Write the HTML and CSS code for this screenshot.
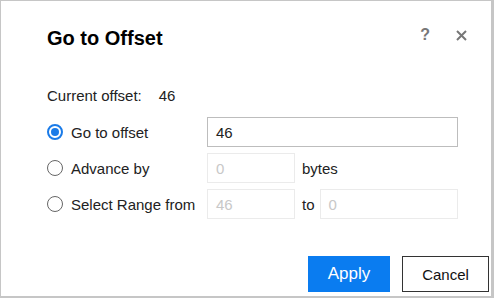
FILE: index.html
```html
<!DOCTYPE html>
<html>
<head>
<meta charset="utf-8">
<link rel="stylesheet" href="styles.css">
</head>
<body>
<div class="dialog">
  <div class="header">
    <h1 class="title">Go to Offset</h1>
    <div class="tools">
      <span class="help">?</span>
      <svg class="close" width="11" height="11" viewBox="0 0 11 11"><path d="M1 1 L10 10 M10 1 L1 10" stroke="#777" stroke-width="2" fill="none"/></svg>
    </div>
  </div>
  <div class="body">
    <div class="current"><span class="cur-label">Current offset:</span><span class="cur-value">46</span></div>
    <div class="row">
      <label class="opt"><span class="radio checked"></span>Go to offset</label>
      <div class="field wide">46</div>
    </div>
    <div class="row">
      <label class="opt"><span class="radio"></span>Advance by</label>
      <div class="field small disabled">0</div>
      <span class="suffix">bytes</span>
    </div>
    <div class="row">
      <label class="opt"><span class="radio"></span>Select Range from</label>
      <div class="field small disabled">46</div>
      <span class="suffix to">to</span>
      <div class="field rest disabled">0</div>
    </div>
  </div>
  <div class="footer">
    <button class="btn primary">Apply</button>
    <button class="btn secondary">Cancel</button>
  </div>
</div>
</body>
</html>
```
FILE: styles.css
```css
* { box-sizing: border-box; }
html, body { margin: 0; padding: 0; background: #fff; }
body { font-family: "Liberation Sans", Arial, sans-serif; color: #222; }
.dialog {
  width: 494px;
  height: 298px;
  border-top: 1px solid #c6c6c6;
  border-left: 1px solid #c6c6c6;
  border-right: 3px solid #c6c6c6;
  border-bottom: 2px solid #c6c6c6;
  display: flex;
  flex-direction: column;
  background: #fff;
}
.header {
  display: flex;
  align-items: flex-start;
  justify-content: space-between;
  padding: 25px 0 0 46px;
  height: 49px;
}
.title {
  margin: 0;
  font-size: 20px;
  line-height: 24px;
  font-weight: bold;
  color: #000;
}
.tools {
  display: flex;
  align-items: center;
  gap: 26px;
  padding-right: 24px;
  margin-top: 1px;
}
.help {
  font-size: 16px;
  font-weight: bold;
  color: #777;
  line-height: 16px;
}
.close { display: block; }
.body {
  padding: 37px 0 0 46px;
  display: flex;
  flex-direction: column;
  gap: 6px;
}
.current {
  font-size: 15px;
  line-height: 18px;
  margin-bottom: 6px;
}
.cur-value { margin-left: 17px; }
.row {
  display: flex;
  align-items: center;
  height: 30px;
  font-size: 15px;
}
.opt {
  width: 160px;
  display: flex;
  align-items: center;
  gap: 8px;
}
.radio {
  width: 16px;
  height: 16px;
  border-radius: 50%;
  border: 1.5px solid #666;
  display: flex;
  align-items: center;
  justify-content: center;
}
.radio.checked { border: 2px solid #1a7be8; }
.radio.checked::after {
  content: "";
  width: 8px;
  height: 8px;
  border-radius: 50%;
  background: #1a7be8;
}
.field {
  height: 30px;
  border: 1px solid #bdbdbd;
  padding: 0 8px;
  display: flex;
  align-items: center;
  font-size: 15px;
  color: #222;
}
.field.wide { width: 251px; }
.field.small { width: 88px; }
.field.rest { width: 138px; }
.field.disabled { border-color: #ebebeb; color: #c8c8c8; }
.suffix { margin-left: 7px; }
.suffix.to { margin-right: 5px; }
.footer {
  margin-top: auto;
  display: flex;
  justify-content: flex-end;
  gap: 12px;
  padding: 0 2px 4px 0;
}
.btn {
  height: 36px;
  font-family: "Liberation Sans", Arial, sans-serif;
  cursor: pointer;
  padding: 0;
}
.primary {
  width: 82px;
  background: #0a7cf0;
  border: none;
  color: #fff;
  font-size: 17px;
}
.secondary {
  width: 87px;
  background: #fff;
  border: 1.5px solid #333;
  color: #111;
  font-size: 15px;
}
```
